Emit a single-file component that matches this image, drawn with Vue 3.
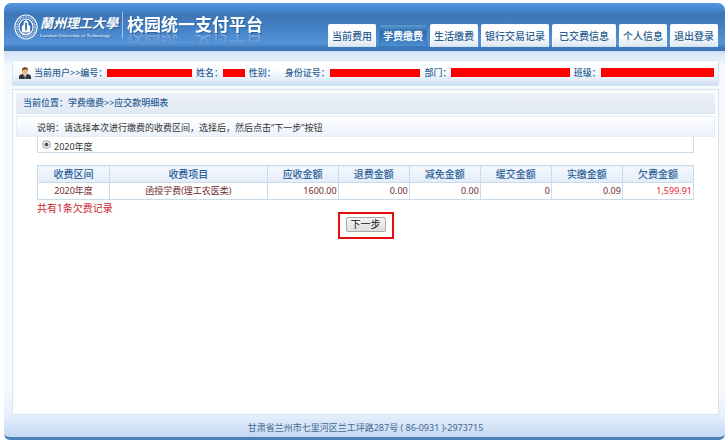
<script setup>
import { ref } from 'vue';

const tabs = ['当前费用', '学费缴费', '生活缴费', '银行交易记录', '已交费信息', '个人信息', '退出登录'];
const activeTab = ref('学费缴费');

const period = ref('2020年度');

const columns = ['收费区间', '收费项目', '应收金额', '退费金额', '减免金额', '缓交金额', '实缴金额', '欠费金额'];
const records = ref([
  {
    period: '2020年度',
    item: '函授学费(理工农医类)',
    amounts: ['1600.00', '0.00', '0.00', '0', '0.09'],
    owed: '1,599.91',
  },
]);
</script>

<template>
  <div class="page">
    <header class="top">
      <div class="brand">
        <svg class="seal" viewBox="0 0 26 28" aria-hidden="true">
          <ellipse cx="13" cy="14" rx="12" ry="13" fill="#3e76b4" stroke="#fff" stroke-width="1.2" />
          <ellipse cx="13" cy="14" rx="9.8" ry="10.8" fill="none" stroke="#c9dff5" stroke-width="1.8" stroke-dasharray="1 .8" />
          <ellipse cx="13" cy="14" rx="7.6" ry="8.6" fill="#3770ae" stroke="#fff" stroke-width="1.2" />
          <path d="M8.5 19.5V13l2-1.5V8.5L13 6.5l2.5 2v3l2 1.5v6.5z" fill="#fff" />
          <path d="M12 9.5h2v8h-2z" fill="#3770ae" />
          <path d="M8 20.5h10" stroke="#fff" />
        </svg>
        <div class="school">
          <span class="school-cn">蘭州理工大學</span>
          <span class="school-en">Lanzhou University of Technology</span>
        </div>
        <h1>校园统一支付平台</h1>
      </div>
      <nav class="tabs">
        <a
          v-for="tab in tabs"
          :key="tab"
          href="#"
          :class="{ active: tab === activeTab, roomy: tab === '已交费信息' }"
          @click.prevent="activeTab = tab"
        >{{ tab }}</a>
      </nav>
    </header>

    <div class="body">
      <div class="user">
        <svg class="avatar" viewBox="0 0 12 12" aria-hidden="true">
          <path d="M0 12V9.5Q0 7.5 4 7h4q4 .5 4 2.500V12z" fill="#303943" />
          <path d="M4.200 7 6 11 7.800 7z" fill="#fff" />
          <path d="M5.600 8h.8l.4 3-.8 1-.8-1z" fill="#9b5140" />
          <ellipse cx="6" cy="4.300" rx="2.800" ry="3.300" fill="#efb276" />
          <path d="M3 4Q2.600.2 6 .2T9 4Q8.500 2.500 7 2.300 4 2 3 4z" fill="#5a3926" />
        </svg>
        <span class="field">当前用户&gt;&gt;编号：</span><i class="mask number"></i>
        <span class="field">姓名：</span><i class="mask name"></i>
        <span class="field sex">性别：</span>
        <span class="field">身份证号：</span><i class="mask card"></i>
        <span class="field">部门：</span><i class="mask dept"></i>
        <span class="field">班级：</span><i class="mask grade"></i>
      </div>

      <main class="panel">
        <div class="crumb">当前位置：学费缴费&gt;&gt;应交款明细表</div>
        <div class="hint">说明：请选择本次进行缴费的收费区间，选择后，然后点击“下一步”按钮</div>

        <div class="content">
          <div class="period">
            <input id="period" v-model="period" type="radio" name="period" value="2020年度" />
            <label for="period">2020年度</label>
          </div>

          <table>
            <colgroup>
              <col class="col-period" />
              <col class="col-item" />
              <col v-for="n in 6" :key="n" />
            </colgroup>
            <thead>
              <tr>
                <th v-for="column in columns" :key="column">{{ column }}</th>
              </tr>
            </thead>
            <tbody>
              <tr v-for="record in records" :key="record.period">
                <td>{{ record.period }}</td>
                <td>{{ record.item }}</td>
                <td v-for="(amount, i) in record.amounts" :key="i" class="amount">{{ amount }}</td>
                <td class="amount owed">{{ record.owed }}</td>
              </tr>
            </tbody>
          </table>

          <p class="total">共有{{ records.length }}条欠费记录</p>
        </div>

        <div class="next">
          <button type="button">下一步</button>
        </div>
      </main>

      <footer>甘肃省兰州市七里河区兰工坪路287号 ( 86-0931 )-2973715</footer>
    </div>
  </div>
</template>

<style>
body {
  background: #fff;
}
</style>

<style scoped>
.page {
  box-sizing: border-box;
  display: flex;
  flex-direction: column;
  min-height: 100vh;
  padding: 3px 3px 5px 4px;
  font-family: "Noto Sans", "Noto Sans CJK SC", sans-serif;
  font-size: 9px;
  line-height: 16px;
  color: #333;
}

.top {
  display: flex;
  justify-content: space-between;
  align-items: flex-end;
  box-sizing: border-box;
  height: 48px;
  padding: 0 7px 3px 10px;
  border-bottom: 1px solid #3a6fac;
  border-radius: 7px 7px 0 0;
  background: linear-gradient(#5596e4, #4584cd 15%, #3c76b6 24%, #4380c4 50%, #5593d8 85%, #4a86c8 92%, #3d78b9 94%);
}

.brand {
  display: flex;
  align-items: center;
  align-self: flex-start;
  height: 44px;
  color: #fff;
  white-space: nowrap;
}

.seal {
  width: 24px;
  height: 28px;
  margin-top: 3px;
}

.school {
  display: flex;
  flex-direction: column;
  margin: 3px 4px 0 2px;
  text-shadow: 1px 1px 1px #265a94;
}

.school-cn {
  font-family: "Liberation Serif", "Noto Sans CJK TC", serif;
  font-size: 13px;
  font-style: italic;
  font-weight: bold;
  line-height: 18px;
}

.school-en {
  font-family: "Liberation Serif", serif;
  font-size: 5px;
  line-height: 6px;
}

h1 {
  margin: 0;
  padding-left: 4px;
  border-left: 1px solid #9dc0e6;
  font-size: 17px;
  line-height: 26px;
  text-shadow: 1px 1px 1px #2c619e;
  -webkit-box-reflect: below -9px linear-gradient(transparent 40%, rgba(255, 255, 255, 0.35));
}

.tabs {
  display: flex;
  gap: 3px;
}

.tabs a {
  box-sizing: border-box;
  height: 23px;
  padding: 0 3px;
  border: 1px solid #f5f9fd;
  border-bottom-color: #d3e0ed;
  border-radius: 2px 2px 0 0;
  background: linear-gradient(#fff 50%, #dde7f2);
  color: #2b5e91;
  font-size: 10px;
  font-weight: 500;
  line-height: 22px;
  text-decoration: none;
  white-space: nowrap;
}

.tabs a.active {
  border-color: #3c79b8;
  background: linear-gradient(#5f9ad5, #2f6eac 30%, #3476b8 60%, #4c91d4);
  color: #fff;
  font-weight: bold;
}

.tabs a.roomy {
  padding: 0 6px;
}

.body {
  display: flex;
  flex: 1;
  flex-direction: column;
  padding: 9px 6px 0 8px;
  border-bottom: 3px solid #4a80b9;
  border-radius: 0 0 6px 6px;
  background: linear-gradient(#cfe0f5, #f3f9fe 14px, #f3f9fd 88%, #e9f0fb 94%, #c3d8f3);
}

.user {
  display: flex;
  align-items: center;
  box-sizing: border-box;
  height: 26px;
  margin-bottom: 3px;
  padding: 0 4px 1px 6px;
  border: 1px solid #d5e4ef;
  border-radius: 2px;
  background: linear-gradient(#fff 35%, #e2ecf8 80%, #cedff2);
  color: #2c5f93;
  font-weight: 500;
  white-space: nowrap;
}

.avatar {
  flex: none;
  width: 12px;
  height: 12px;
  margin-right: 3px;
}

.mask {
  height: 8px;
  margin-right: 4px;
  background: #f00;
}

.number {
  flex: 86;
}

.name {
  flex: 22;
}

.sex {
  margin-right: 9px;
}

.card {
  flex: 92;
}

.dept {
  flex: 120;
  height: 9px;
}

.grade {
  flex: 115;
  height: 9px;
  margin-right: 0;
}

.panel {
  flex: 1;
  padding: 3px;
  border: 1px solid #d5e4ef;
  background: #fff;
}

.crumb {
  height: 20px;
  margin-bottom: 2px;
  padding-left: 7px;
  border-bottom: 1px solid #dce6f0;
  background: linear-gradient(#edf2fb, #e1e9f4);
  color: #2c5f93;
  font-weight: 500;
  line-height: 20px;
}

.hint {
  height: 19px;
  padding-left: 20px;
  border: 1px solid #e6edf5;
  background: linear-gradient(#fff, #ecf1fb);
  line-height: 21px;
}

.content {
  margin: 0 21px;
}

.period {
  display: flex;
  align-items: center;
  height: 15px;
  padding-left: 4px;
  border: 1px solid #cddce8;
  border-top: 0;
}

.period input {
  width: 9px;
  height: 9px;
  margin: 0 3px 0 0;
  border: 1px solid #a5a5a5;
  border-radius: 50%;
  background: radial-gradient(#555 35%, #e8e8e8 45%);
  appearance: none;
}

.period label {
  padding-top: 4px;
}

table {
  width: 100%;
  margin-top: 12px;
  border-collapse: collapse;
  table-layout: fixed;
}

.col-period {
  width: 11%;
}

.col-item {
  width: 24%;
}

th,
td {
  padding: 0 1px;
  border: 1px solid #c9dbe9;
  line-height: 16px;
}

th {
  background: linear-gradient(#f4f8fe, #e3edf9);
  color: #2c6297;
  font-size: 10px;
  font-weight: 500;
}

td {
  color: #702c30;
  text-align: center;
}

td.amount {
  text-align: right;
}

td.owed {
  color: #e0252b;
}

.total {
  margin: 0;
  color: #c9232d;
  font-size: 10px;
}

.next {
  width: fit-content;
  margin: -4px auto 0;
  padding: 3px 6px 5px;
  border: 2px solid #e80c0c;
}

button {
  display: block;
  width: 40px;
  height: 15px;
  padding: 0;
  border: 1px solid #a9a9a9;
  border-radius: 2px;
  background: linear-gradient(#f6f6f6, #dedede);
  color: #111;
  font-family: inherit;
  font-size: 10px;
  line-height: 13px;
}

footer {
  height: 22px;
  color: #45698f;
  line-height: 25px;
  text-align: center;
}
</style>
